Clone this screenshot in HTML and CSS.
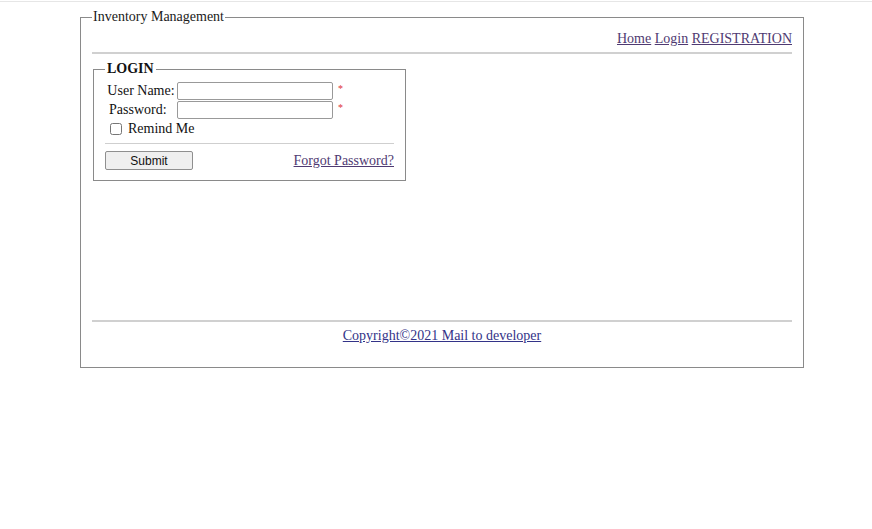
FILE: index.html
```html
<!DOCTYPE html>
<html>
<head>
<meta charset="utf-8">
<link rel="stylesheet" href="styles.css">
</head>
<body>
<div class="topline"></div>
<fieldset class="outer">
  <legend class="outer-legend">Inventory Management</legend>
  <div class="nav">
    <a href="#" class="visited">Home</a> <a href="#" class="visited">Login</a> <a href="#" class="visited">REGISTRATION</a>
  </div>
  <hr class="rule">
  <div class="main">
    <fieldset class="login">
      <legend class="login-legend">LOGIN</legend>
      <div class="form-grid">
        <label class="lbl">User Name:</label>
        <input class="field" type="text">
        <span class="req">*</span>
        <label class="lbl pw">Password:</label>
        <input class="field" type="password">
        <span class="req">*</span>
      </div>
      <div class="remind">
        <input type="checkbox" class="chk"><span>Remind Me</span>
      </div>
      <hr class="rule small">
      <div class="actions">
        <button class="btn">Submit</button>
        <a href="#" class="visited">Forgot Password?</a>
      </div>
    </fieldset>
  </div>
  <hr class="rule">
  <div class="footer">
    <a href="#" class="copy">Copyright©2021 Mail to developer</a>
  </div>
</fieldset>
</body>
</html>
```
FILE: styles.css
```css
html, body {
  margin: 0;
  padding: 0;
  background: #fff;
}
body {
  font-family: "Liberation Serif", "Times New Roman", serif;
  font-size: 14px;
  color: #111;
}
.topline {
  margin-top: 1px;
  height: 1px;
  background: #e6e6e6;
}
.outer {
  margin: 7px 0 0 80px;
  width: 724px;
  box-sizing: border-box;
  border: 1px solid #8a8a8a;
  padding: 0 11px 0 11px;
  height: 359px;
}
.outer-legend {
  padding: 0 1px;
  line-height: 16px;
  color: #1a1a1a;
}
.nav {
  text-align: right;
  margin-top: 6px;
  line-height: 16px;
  padding-right: 0;
}
a.visited {
  color: #4f3a72;
}
.rule {
  border: 0;
  border-top: 2px solid #d0d0d0;
  margin: 5px 0 0 0;
  height: 0;
}
.rule.small {
  border-top: 1px solid #cfcfcf;
  margin: 5px 0 0 0;
}
.main {
  height: 261px;
  padding-top: 7px;
  box-sizing: border-box;
}
.login {
  margin: 0 0 0 1px;
  width: 313px;
  box-sizing: border-box;
  border: 1px solid #8a8a8a;
  padding: 0 11px 10px 11px;
}
.login-legend {
  font-weight: bold;
  padding: 0 2px;
  line-height: 16px;
}
.form-grid {
  display: grid;
  grid-template-columns: 72px 156px auto;
  row-gap: 1px;
  align-items: center;
  margin-top: 5px;
}
.lbl {
  text-align: center;
  line-height: 18px;
}
.lbl.pw {
  text-align: left;
  padding-left: 4px;
}
.field {
  margin: 0;
  height: 18px;
  box-sizing: border-box;
  border: 1px solid #999;
  border-radius: 2px;
  padding: 0 2px;
}
.req {
  color: #d33;
  font-size: 10px;
  padding-left: 5px;
  align-self: start;
  line-height: 14px;
}
.remind {
  display: flex;
  align-items: center;
  margin-top: 1px;
  line-height: 18px;
  padding-left: 4px;
}
.chk {
  margin: 0 6px 0 1px;
  width: 12px;
  height: 12px;
}
.actions {
  display: flex;
  justify-content: space-between;
  align-items: center;
  margin-top: 7px;
}
.btn {
  width: 88px;
  height: 19px;
  font-family: "Liberation Sans", Arial, sans-serif;
  font-size: 12px;
  background: #efefef;
  border: 1px solid #8f8f8f;
  border-radius: 2px;
  padding: 0;
  color: #111;
}
.footer {
  text-align: center;
  margin-top: 6px;
  line-height: 16px;
}
a.copy {
  color: #333388;
}
```
